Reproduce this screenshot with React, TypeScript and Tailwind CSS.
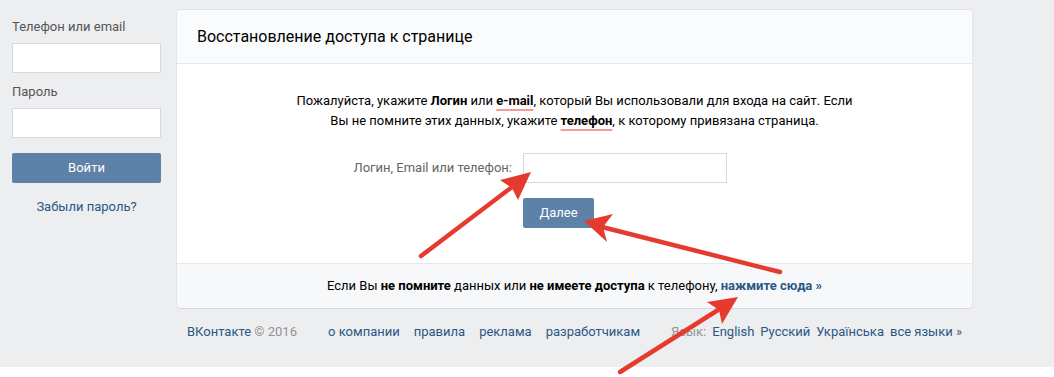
import React from "react";

const font = { fontFamily: "Roboto, 'Open Sans', Arial, sans-serif" };

function LoginColumn() {
  return (
    <aside className="w-[149px] shrink-0 pt-[9px] text-[13px]">
      <label className="block leading-[16px] text-[#555]">Телефон или email</label>
      <input className="mt-[8px] block h-[30px] w-full border border-[#d3d9de] bg-white px-2 outline-none" />
      <label className="mt-[11px] block leading-[16px] text-[#555]">Пароль</label>
      <input
        type="password"
        className="mt-[8px] block h-[30px] w-full border border-[#d3d9de] bg-white px-2 outline-none"
      />
      <button className="mt-[15px] block h-[30px] w-full rounded-[2px] bg-[#5e81a8] text-[13px] font-normal text-white">
        Войти
      </button>
      <a className="mt-[16px] block text-center leading-[16px] text-[#2a5885]">Забыли пароль?</a>
    </aside>
  );
}

function RestorePanel() {
  return (
    <section className="w-[795px] overflow-hidden rounded-[4px] bg-white shadow-[0_1px_0_0_#d7d8db,0_0_0_1px_#e3e4e8]">
      <header className="flex h-[54px] items-center border-b border-[#e7e8ec] bg-[#fafbfc] px-[20px]">
        <h1 className="text-[16px] text-[#000]">Восстановление доступа к странице</h1>
      </header>

      <div className="pt-[27px] pb-[35px] text-[13px] text-black">
        <p className="text-center leading-[20px]">
          Пожалуйста, укажите <b>Логин</b> или{" "}
          <b className="underline decoration-[#f19c9c] decoration-2 underline-offset-[4px]">e-mail</b>, который Вы
          использовали для входа на сайт. Если
          <br />
          Вы не помните этих данных, укажите{" "}
          <b className="underline decoration-[#f19c9c] decoration-2 underline-offset-[4px]">телефон</b>, к которому
          привязана страница.
        </p>

        <div className="mt-[22px] flex items-center">
          <label className="w-[346px] pr-[11px] text-right text-[#656565]">Логин, Email или телефон:</label>
          <input className="h-[30px] w-[204px] border border-[#d3d9de] bg-white px-2 outline-none" />
        </div>
        <div className="mt-[15px] pl-[346px]">
          <button className="h-[30px] w-[71px] rounded-[2px] bg-[#5e81a8] text-[13px] font-normal text-white">
            Далее
          </button>
        </div>
      </div>

      <div className="border-t border-[#e7e8ec] bg-[#f7f8fa] py-[12px] text-center text-[13px] leading-[20px] text-black">
        Если Вы <b>не помните</b> данных или <b>не имеете доступа</b> к телефону,{" "}
        <a className="font-bold text-[#2a5885]">нажмите сюда »</a>
      </div>
    </section>
  );
}

function PageFooter() {
  return (
    <footer className="mt-[16px] flex w-[795px] justify-between px-[10px] text-[13px] leading-[16px] text-[#2a5885]">
      <div>
        ВКонтакте <span className="text-[#939393]">© 2016</span>
      </div>
      <nav className="flex gap-[14px]">
        <a>о компании</a>
        <a>правила</a>
        <a>реклама</a>
        <a>разработчикам</a>
      </nav>
      <div className="flex gap-[6px]">
        <span className="text-[#939393]">Язык:</span>
        <a>English</a>
        <a>Русский</a>
        <a>Українська</a>
        <a>все языки »</a>
      </div>
    </footer>
  );
}

function Arrows() {
  const red = "#e53b2f";
  return (
    <svg className="pointer-events-none absolute inset-0" width="1054" height="377" viewBox="0 0 1054 377">
      <g stroke={red} strokeWidth="4.5" strokeLinecap="round" fill="none">
        <line x1="421" y1="256" x2="512" y2="187" />
        <line x1="780" y1="272" x2="602" y2="227" />
        <line x1="620" y1="372" x2="718" y2="310" />
      </g>
      <g fill={red}>
        <polygon points="531,172 500,180 512,188 518,200" />
        <polygon points="584,221 613,214 603,227 607,242" />
        <polygon points="738,297 707,302 719,310 722,324" />
      </g>
    </svg>
  );
}

export default function App() {
  return (
    <div className="relative h-[377px] w-[1054px] overflow-hidden bg-white" style={font}>
      <div className="h-[367px] bg-[#edeef0] pl-[12px] pt-[10px]">
        <div className="flex gap-[16px]">
          <LoginColumn />
          <div>
            <RestorePanel />
            <PageFooter />
          </div>
        </div>
      </div>
      <Arrows />
    </div>
  );
}
